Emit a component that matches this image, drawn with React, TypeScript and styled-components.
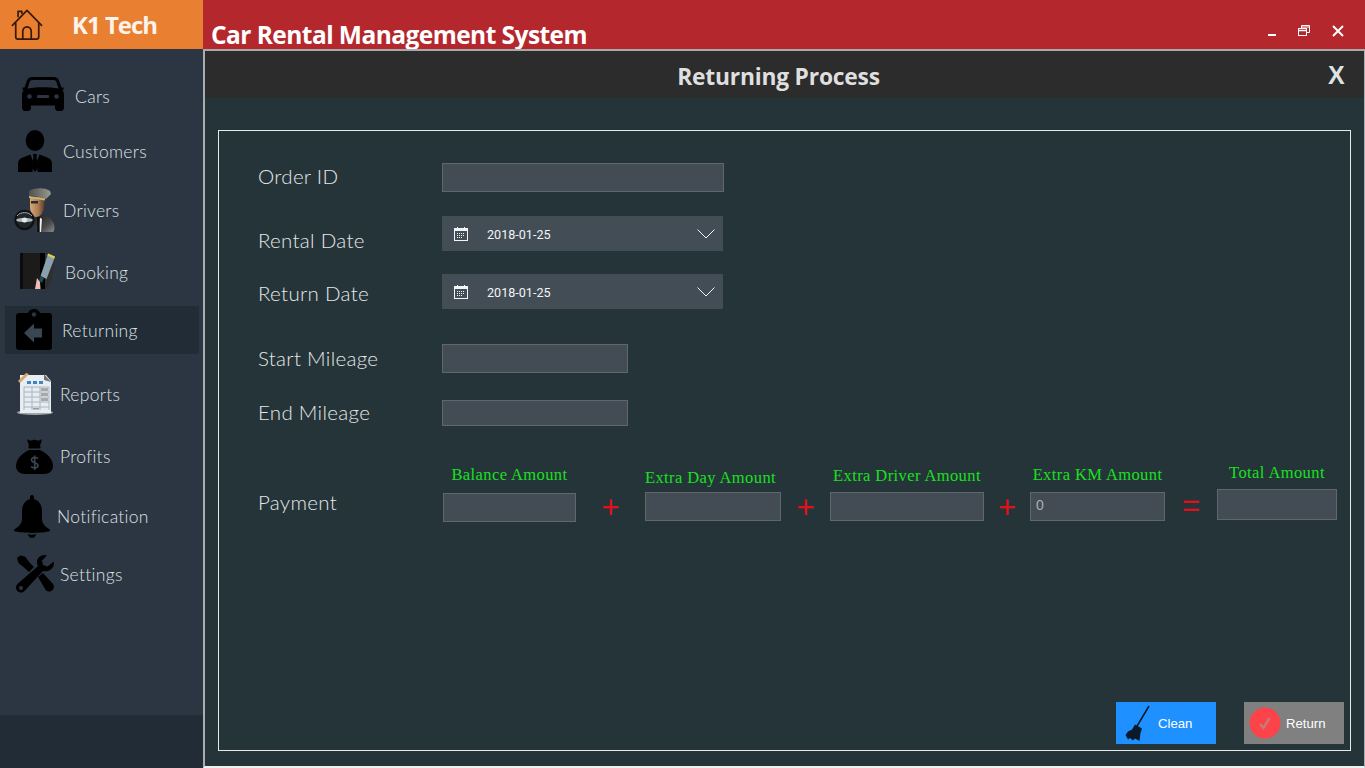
import React from "react";
import styled, { createGlobalStyle } from "styled-components";

const Global = createGlobalStyle`
  html, body { margin: 0; padding: 0; background: #fff; overflow: hidden; }
  * { box-sizing: border-box; }
`;

const Shell = styled.div`
  width: 1365px; height: 768px; display: grid; grid-template-columns: 203px 1fr; overflow: hidden;
`;
const Side = styled.aside`
  display: flex; flex-direction: column; background: #2c3642;
`;
const Brand = styled.div`
  height: 49px; background: #e97f30; display: flex; align-items: center; flex: none;
`;
const HomeSlot = styled.div`
  margin-left: 11px; width: 32px; height: 49px; display: flex; align-items: center;
  svg { display: block; }
`;
const BrandName = styled.div`
  margin-left: 29px; font: 700 24px "Open Sans", sans-serif; letter-spacing: -1px; color: #fdf3ea; margin-top: -1px;
`;
const Nav = styled.nav`
  flex: 1; display: flex; flex-direction: column;
`;
const Item = styled.div<{ $mt: number; $x: number; $active?: boolean }>`
  height: 48px; flex: none; margin: ${p => p.$mt}px 4px 0 5px; padding-left: ${p => p.$x - 5}px;
  display: flex; align-items: center; background: ${p => (p.$active ? "#212c37" : "transparent")};
`;
const IconSlot = styled.div<{ $w: number; $h: number; $dy: number }>`
  width: ${p => p.$w}px; height: ${p => p.$h}px; flex: none; margin-top: ${p => p.$dy}px;
  svg { display: block; width: 100%; height: 100%; }
`;
const ItemLabel = styled.span<{ $gap: number }>`
  margin-left: ${p => p.$gap}px; font: 300 17.5px Lato, sans-serif; letter-spacing: 0.3px; color: #dde1e3;
`;
const SideFoot = styled.div`
  height: 53px; background: #212c37; flex: none;
`;
const Main = styled.main`
  display: flex; flex-direction: column; min-width: 0;
`;
const TitleBar = styled.header`
  height: 49px; background: #b4282d; display: flex; align-items: flex-start; flex: none;
`;
const AppTitle = styled.h1`
  margin: 20px 0 0 8px; font: 700 24.5px/29px "Open Sans", sans-serif; letter-spacing: -0.55px; color: #fff; flex: 1; white-space: nowrap;
`;
const WinButtons = styled.div`
  display: flex; align-items: center; height: 49px; padding: 0 21px 0 0;
`;
const WinBtn = styled.div<{ $ml: number }>`
  margin-left: ${p => p.$ml}px; width: 12px; height: 12px; margin-top: 12px;
  svg { display: block; }
`;
const Panel = styled.section`
  flex: 1; display: flex; flex-direction: column; background: #253439;
  border-top: 2px solid #a9a9ab; border-left: 2px solid #a9adb0; border-right: 1px solid #a9adb0; border-bottom: 2px solid #f0f0f0;
  min-height: 0;
`;
const PanelHead = styled.div`
  height: 47px; flex: none; background: #2c2c2c; display: flex; align-items: center; position: relative;
`;
const PanelTitle = styled.h2`
  margin: 4px 0 0; width: 1147px; text-align: center; font: 700 22.8px "Open Sans", sans-serif; letter-spacing: -0.2px; color: #dfdfdf;
`;
const PanelClose = styled.span`
  position: absolute; left: 1123px; top: 10px; font: 700 25px "Liberation Sans", sans-serif; color: #dde2e4;
`;
const Frame = styled.form`
  flex: 1; margin: 32px 13px 15px 13px; border: 1px solid #e6eaea; padding: 32px 6px 6px 39px;
  display: flex; flex-direction: column;
`;
const Row = styled.div<{ $mt: number; $h: number }>`
  display: flex; align-items: flex-start; margin-top: ${p => p.$mt}px; height: ${p => p.$h}px; flex: none;
`;
const RowLabel = styled.label<{ $top: number }>`
  width: 184px; flex: none; margin-top: ${p => p.$top}px;
  font: 300 20.5px/24px Lato, sans-serif; letter-spacing: 0.3px; color: #e4e7e8;
`;
const Field = styled.input<{ $w: number; $h: number }>`
  width: ${p => p.$w}px; height: ${p => p.$h}px; background: #434c54; border: 1px solid #5e686b;
  padding: 0 5px 4px; font: 400 14px "Liberation Sans", sans-serif; color: #a9b0b5; outline: none; display: block;
`;
const DateBox = styled.div`
  width: 281px; height: 35px; background: #434d55; display: flex; align-items: center; padding: 0 8px 0 12px;
`;
const DateText = styled.span`
  margin: 2px 0 0 19px; flex: 1; font: 400 12.6px Roboto, sans-serif; color: #f2f4f5;
`;
const PayRow = styled.div`
  display: flex; align-items: flex-start; margin-top: 34px; flex: none; height: 74px;
`;
const PayLabel = styled.label`
  width: 185px; flex: none; margin-top: 30px; font: 300 20.5px/24px Lato, sans-serif; letter-spacing: 0.3px; color: #e4e7e8;
`;
const PayCol = styled.div<{ $w: number; $mt: number; $gap: number }>`
  width: ${p => p.$w}px; flex: none; margin-top: ${p => p.$mt}px;
  display: flex; flex-direction: column; align-items: center; gap: ${p => p.$gap}px;
`;
const PayCaption = styled.span<{ $shift?: number }>`
  font: 400 16.5px/18px "Liberation Serif", serif; letter-spacing: 0.4px; color: #19e01f; white-space: nowrap;
  margin-right: ${p => p.$shift ?? 0}px;
`;
const Operator = styled.span<{ $w: number; $top: number }>`
  width: ${p => p.$w}px; flex: none; text-align: center; margin-top: ${p => p.$top}px;
  font: 400 31px/30px "Liberation Sans", sans-serif; color: #e3101a;
`;
const Actions = styled.div`
  margin-top: auto; display: flex; justify-content: flex-end; gap: 28px;
`;
const ActionBtn = styled.button<{ $bg: string }>`
  width: 100px; height: 42px; border: 0; padding: 0; background: ${p => p.$bg}; color: #fff;
  display: flex; align-items: center; font: 400 13.2px "Liberation Sans", sans-serif;
`;
const ActionIcon = styled.span<{ $ml: number; $w: number; $h: number }>`
  margin-left: ${p => p.$ml}px; width: ${p => p.$w}px; height: ${p => p.$h}px; flex: none;
  svg { display: block; }
`;
const ActionText = styled.span<{ $ml: number }>`
  margin-left: ${p => p.$ml}px;
`;

const CarIcon = () => (
  <svg viewBox="0 0 42 34"><path fill="#000" d="M10 0h22c2.600 0 4.200 1.300 5 3.500L39.500 10.500H41.500V13H40.300C41.400 14.400 42 16 42 18V30C42 32.500 40.800 34 39 34H36C34 34 33 32.700 33 30.500V28.500H9V30.500C9 32.700 8 34 6 34H3C1.200 34 0 32.500 0 30V18C0 16 .6 14.400 1.700 13H.5V10.500H2.500L5 3.500C5.800 1.300 7.400 0 10 0Z"/><path fill="#2c3642" d="M10.500 3H31.500C33 3 34 3.800 34.500 5.200L36.500 11.500C27 9.800 15 9.800 5.500 11.500L7.500 5.200C8 3.800 9 3 10.500 3Z"/><circle cx="7.500" cy="19.500" r="2.300" fill="#2c3642"/><circle cx="34.500" cy="19.500" r="2.300" fill="#2c3642"/><rect x="15" y="18" width="12" height="3" rx="1" fill="#2c3642"/></svg>
);
const PersonIcon = () => (
  <svg viewBox="0 0 34 42"><ellipse cx="17" cy="10.500" rx="9.300" ry="10.500" fill="#000"/><path fill="#000" d="M0 42V34C0 30 2.500 28 6 27L12.500 24.500 15 31 14.500 42ZM34 42V34C34 30 31.500 28 28 27L21.500 24.500 19 31 19.500 42Z"/><path fill="#000" d="M15 24H19L18.500 27 20 38 17 42 14 38 15.500 27Z"/></svg>
);
const DriverIcon = () => (
  <svg viewBox="0 0 41 45">
    <defs>
      <linearGradient id="dg" x1="0" y1="0" x2="1" y2="1"><stop offset="0" stopColor="#1d1d1d"/><stop offset=".6" stopColor="#4a4a4a"/><stop offset="1" stopColor="#8d8d8d"/></linearGradient>
      <linearGradient id="df" x1="0" y1="0" x2="1" y2="0"><stop offset="0" stopColor="#d9a878"/><stop offset=".55" stopColor="#a97b50"/><stop offset="1" stopColor="#4d3b2a"/></linearGradient>
      <linearGradient id="dc" x1="0" y1="0" x2="1" y2="0"><stop offset="0" stopColor="#4e5050"/><stop offset="1" stopColor="#9a9a90"/></linearGradient>
    </defs>
    <path fill="url(#dg)" d="M22 29C29 26 36 28 39 34 41 38 41 42 39 44H23C21 39 20 34 22 29Z"/>
    <path fill="url(#df)" d="M16 9H31L30 20C29 25 26 29 22 29 19 29 16 24 16 19Z"/>
    <path fill="#2b2b2b" d="M17 13H24V15.500H17Z"/>
    <path fill="url(#dc)" d="M15 3C20 0 30 -1 36 3L37 6 32 11C27 9 20 8 15 8Z"/>
    <path fill="#c9b273" d="M15 8 31 10.500 31 12.500 15 10Z"/>
    <path fill="#eee" d="M25 29 28 31 27 44H26Z"/>
    <path fill="#111" d="M23 29H26L25 44H23Z"/>
    <circle cx="10.500" cy="32" r="9" fill="#20272e" stroke="#111" strokeWidth="2.500"/>
    <path fill="none" stroke="#a6aaae" strokeWidth="1" d="M3 28C6 23.500 15 23.500 18 28"/>
    <path fill="#b5b9bc" d="M2.500 31C6 29.500 15 29.500 18.500 31V33C15 34.500 6 34.500 2.500 33Z"/>
    <circle cx="10.500" cy="32" r="2.500" fill="#e6e8ea"/>
  </svg>
);
const BookingIcon = () => (
  <svg viewBox="0 0 35 36">
    <rect x="0" y="0" width="25" height="36" fill="#1d1a1a"/>
    <rect x="0" y="0" width="3" height="36" fill="#0b0b0b"/>
    <rect x="20" y="0" width="5" height="36" fill="#020202"/>
    <path fill="#2f2f2f" d="M25 14 35 5 31 31 25 36Z"/>
    <path fill="#8aa0ad" d="M28 1 35 4 26.500 26 20.500 23Z"/>
    <path fill="#dcd240" d="M28.300 .5 35 3.500 34 5.500 27.300 2.500Z"/>
    <path fill="#1f4a58" d="M20.500 23 24 25 22 30 19 28Z"/>
    <path fill="#efbdb4" d="M17 25 20 29 20.500 36H15Z"/>
  </svg>
);
const ReturnIcon = () => (
  <svg viewBox="0 0 36 41"><path fill="#000" d="M3 4H12C13 1.500 15.300 0 18 0S23 1.500 24 4H33C34.800 4 36 5.200 36 7V38C36 39.800 34.800 41 33 41H3C1.200 41 0 39.800 0 38V7C0 5.200 1.200 4 3 4Z"/><circle cx="18" cy="5.500" r="2.200" fill="#2a3441"/><path fill="#3a4650" d="M8 24 18 14.500V19.500H26V28.500H18V33.500Z"/></svg>
);
const ReportIcon = () => (
  <svg viewBox="0 0 36 42">
    <ellipse cx="18" cy="39.500" rx="18" ry="2.500" fill="#9ea6aa"/>
    <path fill="#e7edf1" d="M3 2H29L34 8V40H3Z"/>
    <path fill="#73736d" d="M27 1 34 9 27 7Z"/>
    <path fill="#d6a66b" d="M1 8 9 0 12 1 3 10Z"/>
    <rect x="10" y="8" width="4" height="3" fill="#3f86c6"/><rect x="16" y="8" width="4" height="3" fill="#3f86c6"/><rect x="22" y="8" width="4" height="3" fill="#3f86c6"/>
    <path stroke="#a8b6bf" strokeWidth="1" fill="none" d="M7 14H32M7 19H32M7 24H32M7 29H32M7 34H32M7 14V37M15 14V37M23 14V37M32 14V37"/>
    <rect x="24" y="15" width="7" height="3" fill="#a9a9a9"/><rect x="24" y="20" width="7" height="3" fill="#a9a9a9"/><rect x="24" y="25" width="7" height="3" fill="#a9a9a9"/><rect x="16" y="35" width="6" height="1.500" fill="#999"/>
  </svg>
);
const BagIcon = () => (
  <svg viewBox="0 0 37 36"><path fill="#000" d="M11 1C14 3 15 3 18.500 1.500 22 3 23 3 26 1L24 8C24.800 8.500 24.800 10 24 10.500H13C12.200 10 12.200 8.500 13 8Z"/><path fill="#000" d="M13 12H24C32 15.500 37 22 37 28 37 33 33 36 28 36H9C4 36 0 33 0 28 0 22 5 15.500 13 12Z"/><path fill="none" stroke="#3a4650" strokeWidth="1.600" d="M22 20.500C20 19 15.500 19 15.500 22 15.500 25.500 22 24 22 27.500 22 30.500 17 30.500 15 28.500M18.700 17.500V32"/></svg>
);
const BellIcon = () => (
  <svg viewBox="0 0 36 43"><path fill="#000" d="M18 0C19.300 0 20 1 20 2.500V4C25 5.500 28 10 28 16V24C28 28 31 32 36 34.500V36C28 38.500 8 38.500 0 36V34.500C5 32 8 28 8 24V16C8 10 11 5.500 16 4V2.500C16 1 16.700 0 18 0Z"/><path fill="#000" d="M14 39C16 40 20 40 22 39 21.800 41.500 20 43 18 43S14.200 41.500 14 39Z"/></svg>
);
const ToolsIcon = () => (
  <svg viewBox="0 0 38 38"><path fill="#000" d="M1 3 4 .5 9 1.500 13.500 7.500 18 12 13 17 8 12.500 2.500 8Z"/><path fill="#000" d="M22 22 27 18 37 29C38.500 31 38 33.500 36.500 35 34.500 37 32 37 30 35.500Z"/><path fill="#000" d="M28 0C24 .5 21 3 21 7 21 8.500 21.300 10 22 11L1.500 29C-.5 31-.5 34 1.500 36 3.500 38 6.500 38 8.500 36L27 16C32 17.500 38 14 38 8L37.800 6.500 31.500 11.500 27 10 26 5.500 31 .5C30.200 .2 29 0 28 0Z"/><circle cx="5" cy="33" r="2" fill="#2c3642"/></svg>
);
const HomeIcon = () => (
  <svg width="32" height="31" viewBox="0 0 34 33" fill="none" stroke="#35190a" strokeWidth="1.800" strokeLinejoin="round" strokeLinecap="round"><path d="M1.500 17.500 17 1.500 32.500 17.500"/><path d="M7.500 8V2.500H11.500V4.500"/><path d="M5 15V29.500C5 31 6 32 7.500 32H27C28.500 32 29.500 31 29.500 29.500V15"/><path d="M12.500 32V24C12.500 21 14.500 19 17 19S21.500 21 21.500 24V32"/></svg>
);
const MinIcon = () => (<svg width="12" height="12" viewBox="0 0 12 12"><rect x="2" y="9" width="8" height="2" fill="#fff"/></svg>);
const RestoreIcon = () => (<svg width="12" height="12" viewBox="0 0 12 12" fill="none" stroke="#fff" strokeWidth="1"><rect x=".5" y="3.500" width="8" height="7"/><path d="M.5 5.500H8.500" strokeWidth="1.500"/><path d="M3.500 3V.5H11.500V7.500H9M3.500 2H11.500" /></svg>);
const CloseIcon = () => (<svg width="12" height="12" viewBox="0 0 12 12" stroke="#fff" strokeWidth="2"><path d="M1 1 11 11M11 1 1 11"/></svg>);
const CalIcon = () => (
  <svg width="14" height="14" viewBox="0 0 14 14" fill="none"><rect x=".5" y="1.500" width="13" height="12" stroke="#f2f4f5"/><rect x="0" y="1" width="14" height="3" fill="#f2f4f5"/><path d="M3.500 0V2M10.500 0V2" stroke="#f2f4f5"/><path d="M3 6.500H11M3 8.500H11M3 10.500H9" stroke="#f2f4f5" strokeDasharray="1 1"/></svg>
);
const Chevron = () => (
  <svg width="18" height="10" viewBox="0 0 18 10" fill="none" stroke="#f2f4f5" strokeWidth="1"><path d="M.5 .5 9 9 17.500 .5"/></svg>
);
const BroomIcon = () => (
  <svg width="25" height="37" viewBox="0 0 25 37"><path d="M24 1 11.500 22" stroke="#0a1a2c" strokeWidth="1.500"/><path fill="#0a1a2c" d="M10 19.500 17 23.500 15.500 28 14.500 36 10 33.500 8 35.500 5 33 3 34.500 .5 30 3 26.500 7 24.500Z"/></svg>
);
const CheckBadge = () => (
  <svg width="32" height="32" viewBox="0 0 32 32"><circle cx="16" cy="16" r="15.500" fill="#fc4349"/><path d="M11 17 14.500 21 20.500 11" fill="none" stroke="#c9787a" strokeWidth="2.500"/></svg>
);

const items: { label: string; x: number; w: number; h: number; dy: number; gap: number; mt: number; icon: React.ReactNode; active?: boolean }[] = [
  { label: "Cars", x: 22, w: 42, h: 34, dy: -4, gap: 11, mt: 23, icon: <CarIcon /> },
  { label: "Customers", x: 18, w: 34, h: 42, dy: -1, gap: 11, mt: 7, icon: <PersonIcon /> },
  { label: "Drivers", x: 14, w: 41, h: 45, dy: 0, gap: 8, mt: 11, icon: <DriverIcon /> },
  { label: "Booking", x: 20, w: 35, h: 36, dy: -2, gap: 10, mt: 14, icon: <BookingIcon /> },
  { label: "Returning", x: 16, w: 36, h: 41, dy: -2, gap: 10, mt: 10, icon: <ReturnIcon />, active: true },
  { label: "Reports", x: 17, w: 36, h: 42, dy: 0, gap: 7, mt: 16, icon: <ReportIcon /> },
  { label: "Profits", x: 16, w: 37, h: 36, dy: 0, gap: 7, mt: 14, icon: <BagIcon /> },
  { label: "Notification", x: 14, w: 36, h: 43, dy: 0, gap: 7, mt: 12, icon: <BellIcon /> },
  { label: "Settings", x: 16, w: 38, h: 38, dy: 0, gap: 6, mt: 10, icon: <ToolsIcon /> },
];

export default function App() {
  return (
    <Shell>
      <Global />
      <Side>
        <Brand>
          <HomeSlot><HomeIcon /></HomeSlot>
          <BrandName>K1 Tech</BrandName>
        </Brand>
        <Nav>
          {items.map(i => (
            <Item key={i.label} $mt={i.mt} $x={i.x} $active={i.active}>
              <IconSlot $w={i.w} $h={i.h} $dy={i.dy}>{i.icon}</IconSlot>
              <ItemLabel $gap={i.gap}>{i.label}</ItemLabel>
            </Item>
          ))}
        </Nav>
        <SideFoot />
      </Side>
      <Main>
        <TitleBar>
          <AppTitle>Car Rental Management System</AppTitle>
          <WinButtons>
            <WinBtn $ml={0}><MinIcon /></WinBtn>
            <WinBtn $ml={20}><RestoreIcon /></WinBtn>
            <WinBtn $ml={22}><CloseIcon /></WinBtn>
          </WinButtons>
        </TitleBar>
        <Panel>
          <PanelHead>
            <PanelTitle>Returning Process</PanelTitle>
            <PanelClose>X</PanelClose>
          </PanelHead>
          <Frame>
            <Row $mt={0} $h={29}>
              <RowLabel $top={1}>Order ID</RowLabel>
              <Field $w={282} $h={29} readOnly />
            </Row>
            <Row $mt={24} $h={35}>
              <RowLabel $top={12}>Rental Date</RowLabel>
              <DateBox><CalIcon /><DateText>2018-01-25</DateText><Chevron /></DateBox>
            </Row>
            <Row $mt={23} $h={35}>
              <RowLabel $top={7}>Return Date</RowLabel>
              <DateBox><CalIcon /><DateText>2018-01-25</DateText><Chevron /></DateBox>
            </Row>
            <Row $mt={35} $h={29}>
              <RowLabel $top={2}>Start Mileage</RowLabel>
              <Field $w={186} $h={29} readOnly />
            </Row>
            <Row $mt={27} $h={26}>
              <RowLabel $top={0}>End Mileage</RowLabel>
              <Field $w={186} $h={26} readOnly />
            </Row>
            <PayRow>
              <PayLabel>Payment</PayLabel>
              <PayCol $w={133} $mt={6} $gap={9}>
                <PayCaption>Balance Amount</PayCaption>
                <Field $w={133} $h={29} readOnly />
              </PayCol>
              <Operator $w={69} $top={33}>+</Operator>
              <PayCol $w={136} $mt={9} $gap={5}>
                <PayCaption $shift={5}>Extra Day Amount</PayCaption>
                <Field $w={136} $h={29} readOnly />
              </PayCol>
              <Operator $w={49} $top={33}>+</Operator>
              <PayCol $w={154} $mt={7} $gap={7}>
                <PayCaption>Extra Driver Amount</PayCaption>
                <Field $w={154} $h={29} readOnly />
              </PayCol>
              <Operator $w={46} $top={33}>+</Operator>
              <PayCol $w={135} $mt={6} $gap={8}>
                <PayCaption>Extra KM Amount</PayCaption>
                <Field $w={135} $h={29} readOnly value="0" />
              </PayCol>
              <Operator $w={52} $top={31}>=</Operator>
              <PayCol $w={120} $mt={4} $gap={7}>
                <PayCaption>Total Amount</PayCaption>
                <Field $w={120} $h={31} readOnly />
              </PayCol>
            </PayRow>
            <Actions>
              <ActionBtn $bg="#1e90ff" type="button">
                <ActionIcon $ml={9} $w={25} $h={37}><BroomIcon /></ActionIcon>
                <ActionText $ml={8}>Clean</ActionText>
              </ActionBtn>
              <ActionBtn $bg="#808080" type="button">
                <ActionIcon $ml={5} $w={32} $h={32}><CheckBadge /></ActionIcon>
                <ActionText $ml={5}>Return</ActionText>
              </ActionBtn>
            </Actions>
          </Frame>
        </Panel>
      </Main>
    </Shell>
  );
}
